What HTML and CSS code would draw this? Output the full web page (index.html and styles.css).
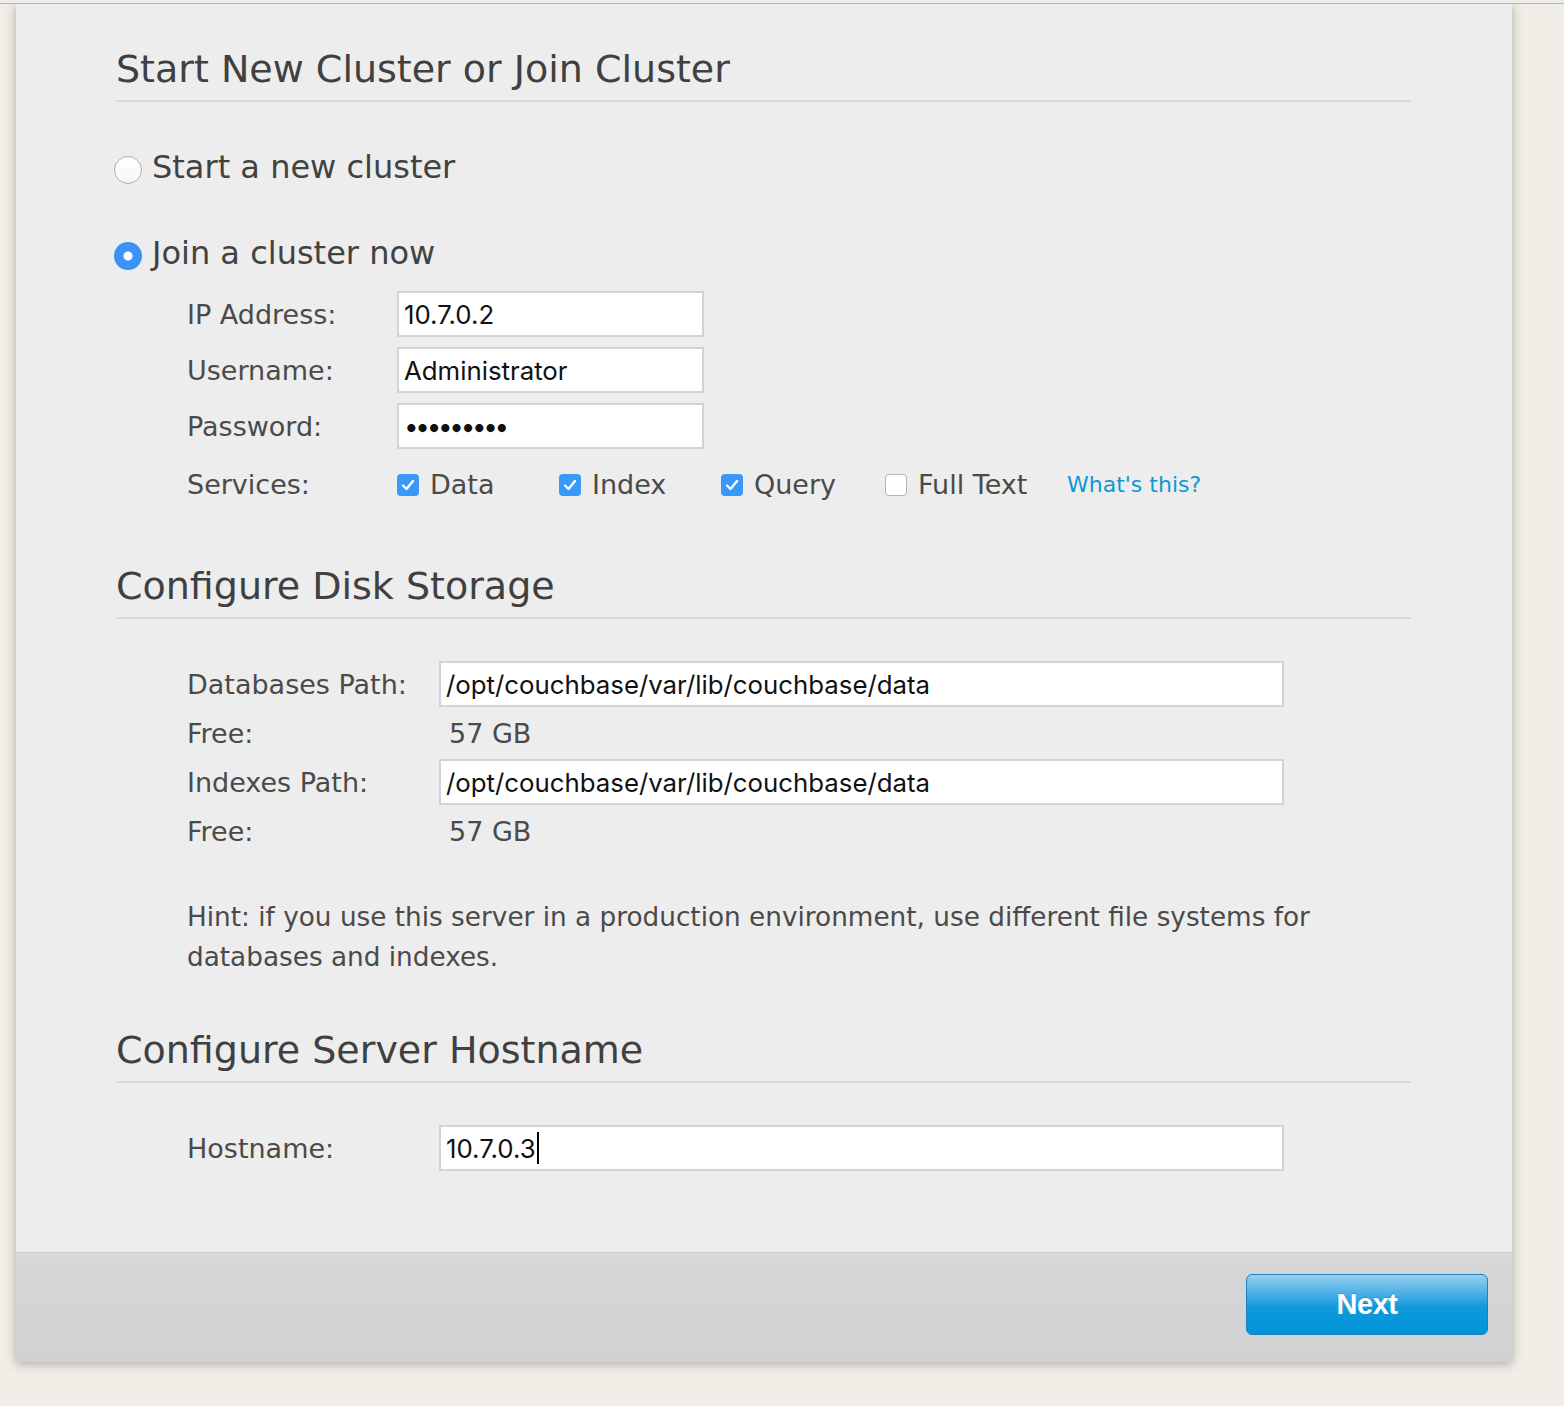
FILE: index.html
```html
<!DOCTYPE html>
<html lang="en">
<head>
<meta charset="utf-8">
<title>Couchbase Setup</title>
<link rel="stylesheet" href="styles.css">
</head>
<body>
<div class="topbar"></div>
<div class="panel">
  <div class="main">
    <h1 class="section-title">Start New Cluster or Join Cluster</h1>

    <div class="choice choice-first"><span class="radio"></span><span>Start a new cluster</span></div>
    <div class="choice choice-second"><span class="radio checked"></span><span>Join a cluster now</span></div>

    <div class="join-form">
      <div class="row"><span class="label">IP Address:</span><div class="field short">10.7.0.2</div></div>
      <div class="row"><span class="label">Username:</span><div class="field short">Administrator</div></div>
      <div class="row"><span class="label">Password:</span><div class="field short dots">•••••••••</div></div>
      <div class="row services">
        <span class="label">Services:</span>
        <div class="opts">
          <span class="opt"><span class="check on"><svg viewBox="0 0 22 22" width="22" height="22"><path d="M6 11.5 L9.5 15 L16 7" fill="none" stroke="#fff" stroke-width="2.4" stroke-linecap="round" stroke-linejoin="round"/></svg></span>Data</span>
          <span class="opt"><span class="check on"><svg viewBox="0 0 22 22" width="22" height="22"><path d="M6 11.5 L9.5 15 L16 7" fill="none" stroke="#fff" stroke-width="2.4" stroke-linecap="round" stroke-linejoin="round"/></svg></span>Index</span>
          <span class="opt"><span class="check on"><svg viewBox="0 0 22 22" width="22" height="22"><path d="M6 11.5 L9.5 15 L16 7" fill="none" stroke="#fff" stroke-width="2.4" stroke-linecap="round" stroke-linejoin="round"/></svg></span>Query</span>
          <span class="opt"><span class="check"></span>Full Text</span>
          <a class="help" href="#">What's this?</a>
        </div>
      </div>
    </div>

    <h2 class="section-title disk-title">Configure Disk Storage</h2>
    <div class="disk">
      <div class="row"><span class="label wide">Databases Path:</span><div class="field long">/opt/couchbase/var/lib/couchbase/data</div></div>
      <div class="row free"><span class="label wide">Free:</span><span class="value">57 GB</span></div>
      <div class="row"><span class="label wide">Indexes Path:</span><div class="field long">/opt/couchbase/var/lib/couchbase/data</div></div>
      <div class="row free"><span class="label wide">Free:</span><span class="value">57 GB</span></div>
    </div>
    <p class="hint">Hint: if you use this server in a production environment, use different file systems for databases and indexes.</p>

    <h2 class="section-title host-title">Configure Server Hostname</h2>
    <div class="host">
      <div class="row"><span class="label wide">Hostname:</span><div class="field long">10.7.0.3<span class="caret"></span></div></div>
    </div>
  </div>
  <div class="footer">
    <button class="next" type="button">Next</button>
  </div>
</div>
</body>
</html>
```

FILE: styles.css
```css
html, body {
  margin: 0;
  padding: 0;
}

body {
  background: #f0ede6;
  font-family: "DejaVu Sans", Verdana, sans-serif;
  color: #444;
  height: 1406px;
  overflow: hidden;
}

.topbar {
  position: relative;
  z-index: 2;
  height: 3px;
  background: #ececec;
  border-bottom: 1px solid #b5b5b5;
}

.panel {
  margin-left: 16px;
  width: 1496px;
  background: #ededed;
  box-shadow: 0 2px 10px rgba(0, 0, 0, 0.28);
}

.main {
  box-sizing: border-box;
  height: 1248px;
  padding: 44px 101px 0 100px;
}

.section-title {
  margin: 0;
  font-size: 38px;
  line-height: 42px;
  font-weight: normal;
  color: #404040;
  padding-bottom: 10px;
  border-bottom: 2px solid #d5d9dc;
}

.choice {
  display: flex;
  align-items: center;
  gap: 10px;
  margin-left: -2px;
  font-size: 32px;
  line-height: 40px;
  color: #424242;
}

.choice-first { margin-top: 45px; }
.choice-second { margin-top: 46px; }

.radio {
  box-sizing: border-box;
  width: 28px;
  height: 28px;
  margin-top: 5px;
  border-radius: 50%;
  border: 1px solid #aeaeae;
  background: linear-gradient(#ffffff, #f6f6f6);
  flex: none;
}

.radio.checked {
  border: none;
  background: radial-gradient(circle, #ffffff 0 4px, #3b93f5 5px);
}

.join-form {
  padding-left: 71px;
  margin-top: 18px;
}

.row {
  display: flex;
  align-items: center;
  min-height: 46px;
}

.join-form .row + .row { margin-top: 10px; }
.join-form .row.services { margin-top: 12px; }

.label {
  width: 210px;
  flex: none;
  font-size: 27px;
  color: #4a4a4a;
}

.label.wide { width: 252px; }

.field {
  box-sizing: border-box;
  height: 46px;
  border: 2px solid #cfd4d8;
  background: #fff;
  display: flex;
  align-items: center;
  padding: 0 5px;
  font-family: Inter, "Liberation Sans", sans-serif;
  font-size: 25.8px;
  color: #111;
}

.field.short { width: 307px; }
.field.long { width: 845px; }
.field.dots { font-size: 26px; letter-spacing: -3.3px; }

.opts {
  display: grid;
  grid-template-columns: 162px 162px 164px 182px auto;
  align-items: center;
}

.opt {
  display: flex;
  align-items: center;
  gap: 11px;
  font-size: 27px;
  color: #4a4a4a;
}

.check {
  box-sizing: border-box;
  width: 22px;
  height: 22px;
  border-radius: 4px;
  border: 1px solid #b3b3b3;
  background: #fff;
  flex: none;
  margin-top: 2px;
}

.check.on {
  border: none;
  background: #3b98fb;
}

.check svg { display: block; }

.help {
  font-size: 22px;
  color: #0b98d9;
  text-decoration: none;
}

.disk-title { margin-top: 58px; }

.disk {
  padding-left: 71px;
  margin-top: 42px;
}

.row.free { min-height: 52px; }

.value {
  padding-left: 10px;
  font-size: 27px;
  color: #4a4a4a;
}

.hint {
  margin: 40px 0 0;
  padding-left: 71px;
  font-size: 26.3px;
  line-height: 40px;
  color: #4a4a4a;
}

.host-title { margin-top: 52px; }

.host {
  padding-left: 71px;
  margin-top: 42px;
}

.caret {
  display: inline-block;
  width: 2px;
  height: 32px;
  background: #000;
  margin-left: 1px;
}

.footer {
  box-sizing: border-box;
  height: 110px;
  border-top: 1px solid #cccccc;
  box-shadow: inset 0 2px 0 #dcdcdc;
  background: linear-gradient(#d7d7d7, #d0d1d3);
  display: flex;
  justify-content: flex-end;
  align-items: flex-start;
  padding: 21px 24px 0 0;
}

.next {
  width: 242px;
  height: 61px;
  border: 1px solid #1f7fc4;
  border-radius: 6px;
  background: linear-gradient(#95d1f2 0%, #55b2e6 28%, #0f9adb 55%, #0094d7 100%);
  color: #fff;
  font-family: "Liberation Sans", Arial, sans-serif;
  font-weight: bold;
  font-size: 29px;
  letter-spacing: -0.5px;
  text-shadow: 0 -1px 0 rgba(0, 60, 120, 0.25);
  cursor: pointer;
}
```
